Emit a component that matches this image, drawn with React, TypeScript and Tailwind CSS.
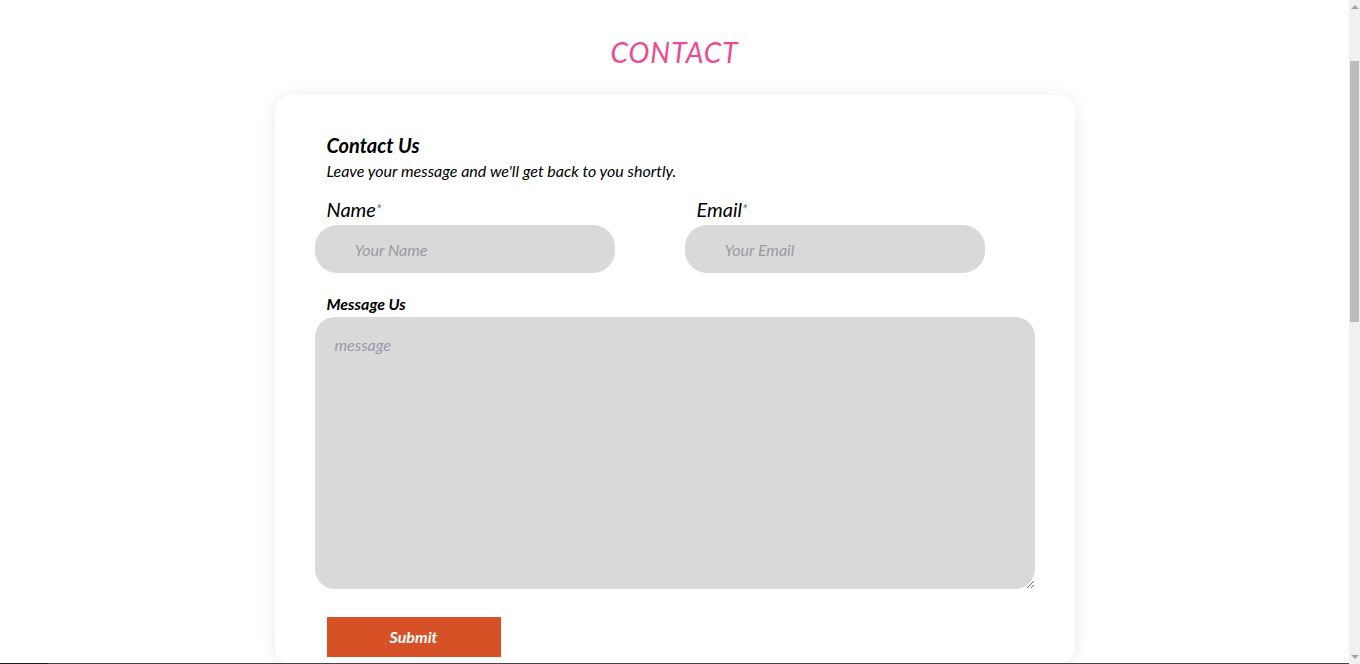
import { useState } from "react";

const Field = ({ label, placeholder }: { label: string; placeholder: string }) => {
  const [value, setValue] = useState("");
  return (
    <div className="w-[300px]">
      <label className="block px-3 text-[20px] leading-[30px] italic text-black">
        {label}
        <span className="text-[14px] align-top text-[#6b6b6b]">*</span>
      </label>
      <input
        value={value}
        onChange={(e) => setValue(e.target.value)}
        placeholder={placeholder}
        className="mt-[1px] h-[48px] w-full rounded-[22px] bg-[#d9d9d9] px-10 text-[16px] italic outline-none placeholder:text-[#9a9aa6]"
      />
    </div>
  );
};

// looks like the browser's scrollbar, sits over the page edge
const FakeScrollbar = () => (
  <div className="fixed top-0 right-0 flex h-screen w-[11px] flex-col items-center bg-[#f0f0f0]">
    <div className="mt-[5px] h-0 w-0 border-x-[4px] border-b-[4px] border-x-transparent border-b-[#a3a3a3]" />
    <div className="mt-[52px] h-[261px] w-[9px] bg-[#bcbcbc]" />
    <div className="flex-1" />
    <div className="mb-[5px] h-0 w-0 border-x-[4px] border-t-[4px] border-x-transparent border-t-[#a3a3a3]" />
  </div>
);

export default function App() {
  return (
    <div className="min-h-screen bg-white font-['Lato',sans-serif] text-black">
      <div className="w-[1349px]">
        <section className="pt-[34px]">
          <h1 className="text-center text-[28px] leading-[36px] italic tracking-[1px] text-[#ec4a92]">
            CONTACT
          </h1>
          <div className="mx-auto mt-[25px] w-[800px] rounded-2xl bg-white px-10 pt-[36px] pb-[6px] shadow-[0_2px_18px_rgba(0,0,0,0.09)]">
            <div className="px-3">
              <h2 className="text-[20px] leading-[28px] font-bold italic">Contact Us</h2>
              <p className="text-[16px] leading-[24px] italic">
                Leave your message and we'll get back to you shortly.
              </p>
            </div>
            <div className="mt-[11px] flex gap-[70px]">
              <Field label="Name" placeholder="Your Name" />
              <Field label="Email" placeholder="Your Email" />
            </div>
            <div className="mt-[18px]">
              <label className="block px-3 text-[16px] leading-[26px] font-bold italic">
                Message Us
              </label>
              <textarea
                placeholder="message"
                className="block h-[272px] w-full resize-y rounded-[20px] bg-[#d9d9d9] px-5 py-4 text-[16px] italic outline-none placeholder:text-[#9a9aa6]"
              />
            </div>
            <div className="mt-[28px] px-3">
              <button className="h-[40px] w-[174px] bg-[#d65126] text-[16px] font-bold italic text-white">
                Submit
              </button>
            </div>
          </div>
        </section>
        <footer className="flex h-[828px] bg-[#444444]">
          <div className="h-full w-[48px] bg-[#1e1e1e]" />
        </footer>
      </div>
      <FakeScrollbar />
    </div>
  );
}
